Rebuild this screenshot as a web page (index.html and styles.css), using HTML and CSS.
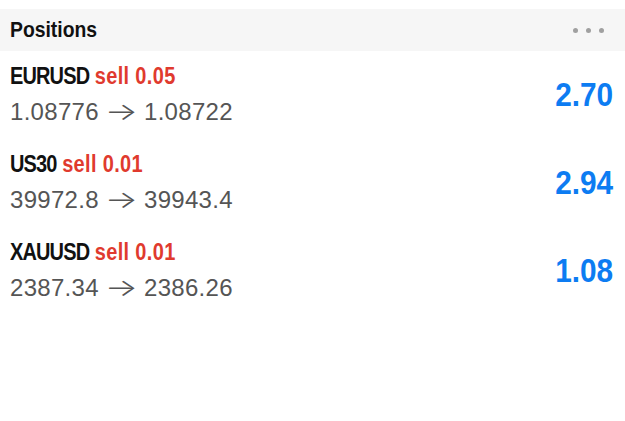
FILE: index.html
```html
<!DOCTYPE html>
<html lang="en">
<head>
    <meta charset="UTF-8">
    <meta name="viewport" content="width=device-width, initial-scale=1.0">
    <title>Positions</title>
    <link rel="stylesheet" href="styles.css">
</head>
<body>
    <div class="panel">
        <div class="panel-header">
            <span class="panel-title">Positions</span>
            <span class="more">
                <i></i><i></i><i></i>
            </span>
        </div>

        <div class="positions">
            <div class="position">
                <div>
                    <div class="position-title"><span class="symbol">EURUSD</span> <span class="side">sell 0.05</span></div>
                    <div class="position-prices">1.08776 <span class="arrow">&rarr;</span> 1.08722</div>
                </div>
                <div class="profit">2.70</div>
            </div>

            <div class="position">
                <div>
                    <div class="position-title"><span class="symbol">US30</span> <span class="side">sell 0.01</span></div>
                    <div class="position-prices">39972.8 <span class="arrow">&rarr;</span> 39943.4</div>
                </div>
                <div class="profit">2.94</div>
            </div>

            <div class="position">
                <div>
                    <div class="position-title"><span class="symbol">XAUUSD</span> <span class="side">sell 0.01</span></div>
                    <div class="position-prices">2387.34 <span class="arrow">&rarr;</span> 2386.26</div>
                </div>
                <div class="profit">1.08</div>
            </div>
        </div>
    </div>
</body>
</html>
```

FILE: styles.css
```css
body {
    margin: 0;
    background: #ffffff;
    font-family: "Liberation Sans", Arial, sans-serif;
}

.panel {
    padding-top: 9px;
}

.panel-header {
    height: 42px;
    background: #f6f6f6;
    display: flex;
    align-items: center;
    justify-content: space-between;
    padding: 0 21px 0 10px;
}

/* no condensed face installed, so squeeze the bold sans */
.panel-title {
    display: inline-block;
    font-weight: bold;
    font-size: 21.5px;
    color: #111;
    transform: scaleX(0.9);
    transform-origin: left center;
}

.more {
    display: flex;
    gap: 8px;
}

.more i {
    width: 5px;
    height: 5px;
    border-radius: 50%;
    background: #a0a0a0;
}

.positions {
    padding-top: 11px;
}

.position {
    display: flex;
    justify-content: space-between;
    align-items: center;
    padding: 0 12px 0 10px;
    margin-bottom: 23px;
}

.position-title {
    display: inline-block;
    font-weight: bold;
    font-size: 23.5px;
    line-height: 28px;
    color: #111;
    white-space: nowrap;
    transform: scaleX(0.85);
    transform-origin: left center;
}

.symbol {
    letter-spacing: -1px;
}

.side {
    color: #e03a2e;
    letter-spacing: 0.4px;
}

.position-prices {
    font-size: 24px;
    line-height: 30px;
    margin-top: 7px;
    color: #555;
    letter-spacing: 0.3px;
}

.arrow {
    display: inline-block;
    font-family: Inter, "DejaVu Sans", sans-serif;
    font-weight: 300;
    margin: 0 4px;
    transform: scaleX(1.45);
}

.profit {
    display: inline-block;
    font-weight: bold;
    font-size: 33.5px;
    color: #0d7cf2;
    transform: scaleX(0.89);
    transform-origin: right center;
}
```
